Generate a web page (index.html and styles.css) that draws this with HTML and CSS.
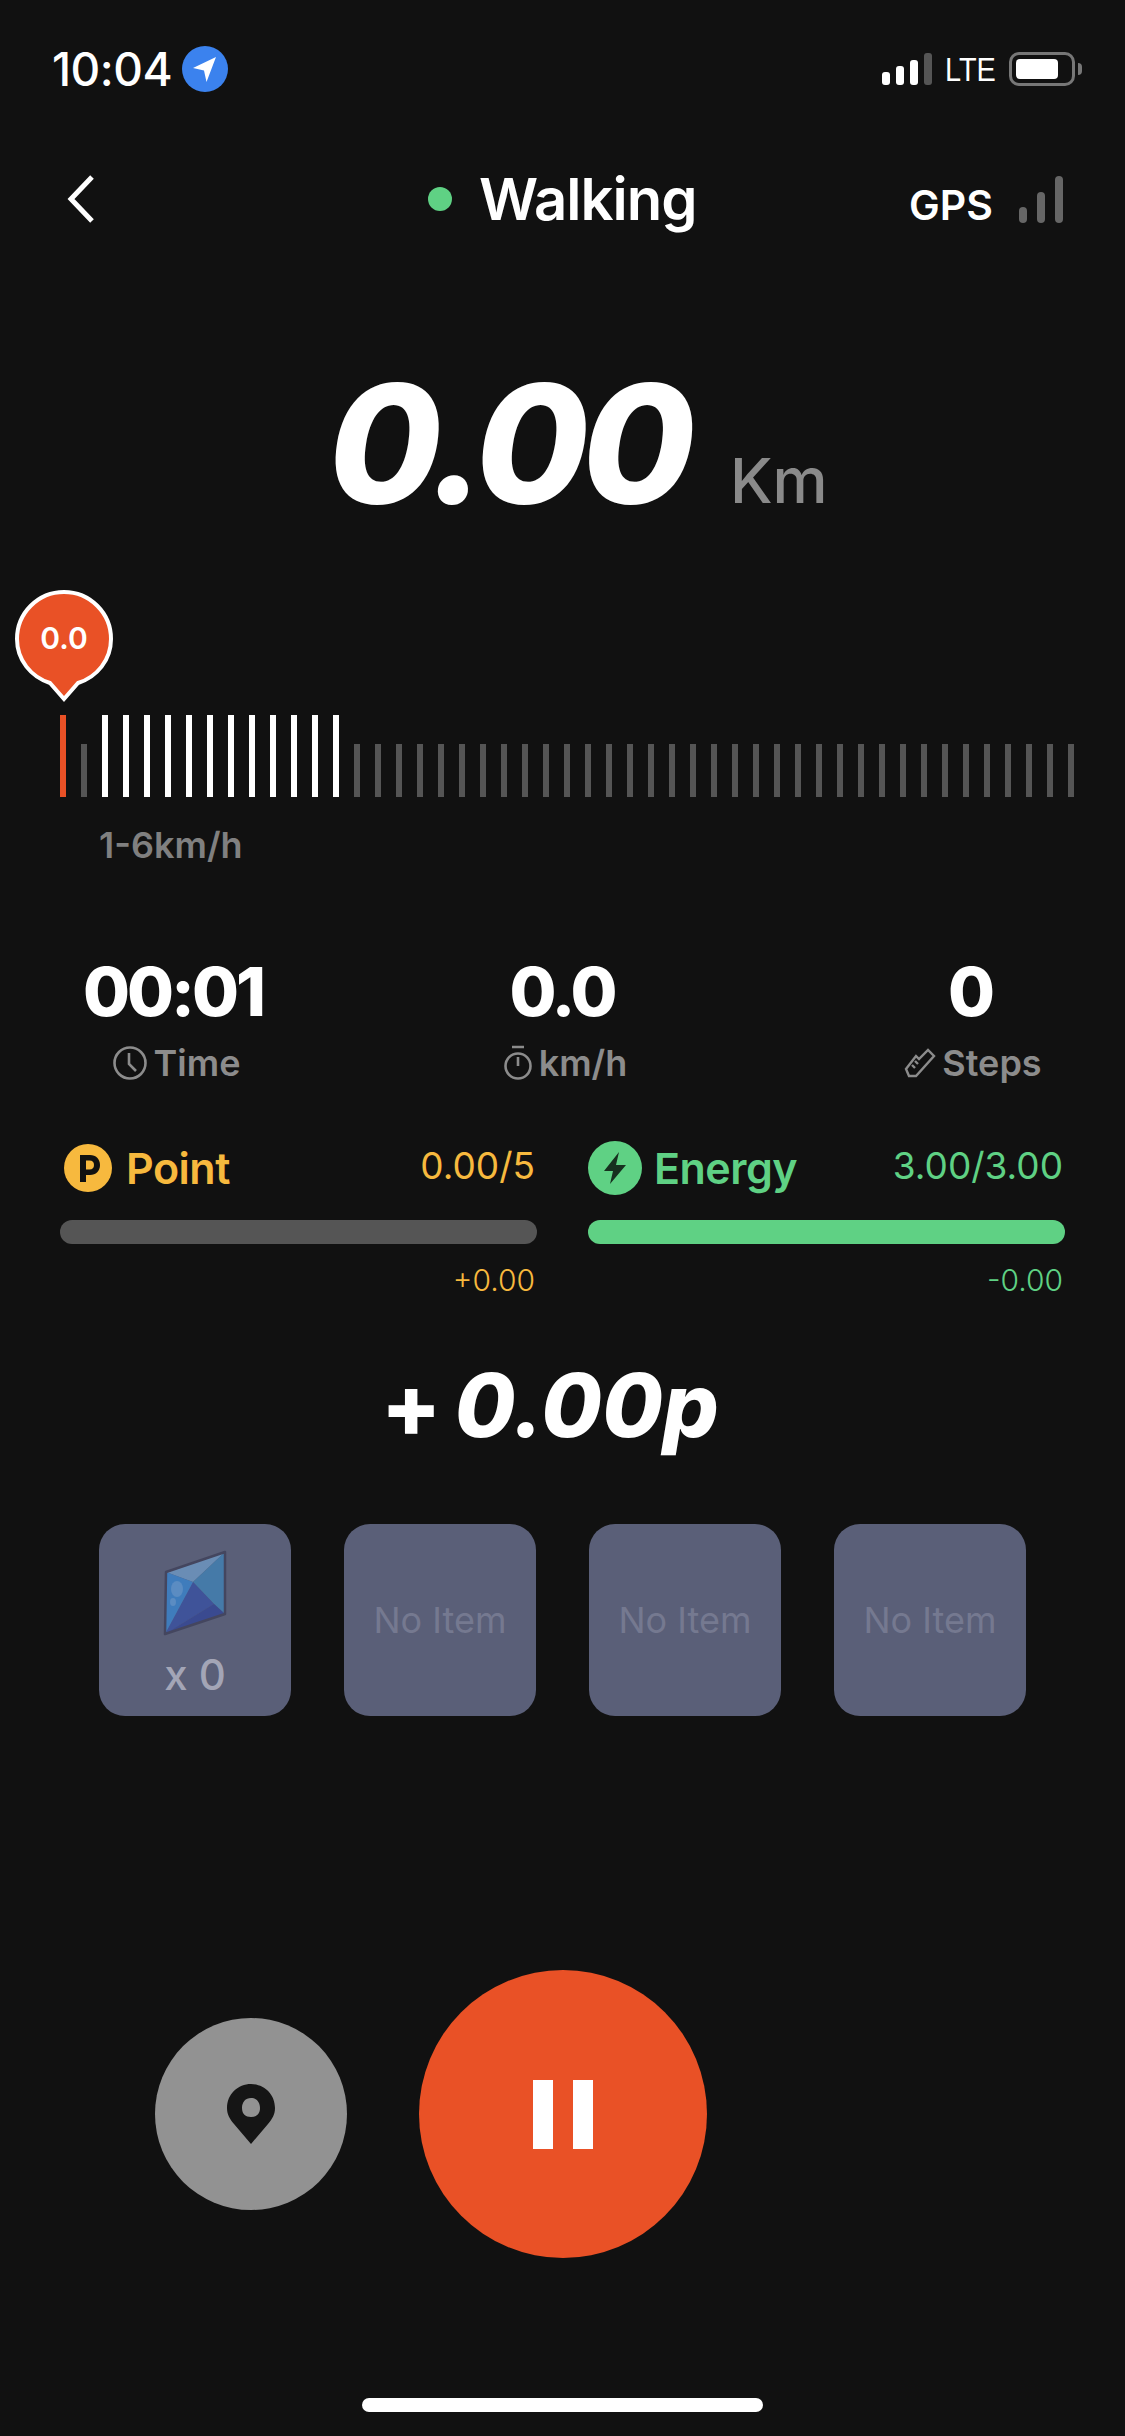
FILE: index.html
```html
<!DOCTYPE html>
<html lang="en">
<head>
	<meta charset="UTF-8">
	<title>Walking</title>
	<link rel="stylesheet" href="styles.css">
</head>
<body>
<div class="screen">
	<!-- status bar -->
	<div class="status">
		<span class="clock">10:04</span>
		<svg class="loc" width="46" height="46" viewBox="0 0 46 46">
			<circle cx="23" cy="23" r="23" fill="#3b82ee"/>
			<path d="M34 11 L11 22 L22 24.5 L24.5 36 Z" fill="#fff"/>
		</svg>
		<span class="status-space"></span>
		<div class="cell-bars">
			<i class="b1"></i><i class="b2"></i><i class="b3"></i><i class="b4"></i>
		</div>
		<span class="lte">LTE</span>
		<div class="battery"><i></i></div>
		<span class="nub"></span>
	</div>

	<!-- nav -->
	<div class="nav">
		<svg class="back" width="30" height="50" viewBox="0 0 30 50">
			<path d="M26 3 L5 25 L26 47" fill="none" stroke="#fff" stroke-width="5"/>
		</svg>
		<span class="dot"></span>
		<span class="title">Walking</span>
		<span class="gps">GPS</span>
		<div class="gps-bars"><i class="g1"></i><i class="g2"></i><i class="g3"></i></div>
	</div>

	<!-- distance -->
	<div class="distance">
		<span class="big">0.00</span>
		<span class="unit">Km</span>
	</div>

	<!-- speed scale -->
	<div class="speed">
		<div class="pin">
			<svg width="100" height="114" viewBox="0 0 100 114">
				<path d="M50 3 C76 3 97 24 97 50 C97 71 83 88 64 94 L50 110 L36 94 C17 88 3 71 3 50 C3 24 24 3 50 3 Z" fill="#e95126" stroke="#fff" stroke-width="4"/>
			</svg>
			<span class="pin-text">0.0</span>
		</div>
		<div class="ticks">
			<i class="on"></i><i></i>
			<i class="hi"></i><i class="hi"></i><i class="hi"></i><i class="hi"></i><i class="hi"></i><i class="hi"></i>
			<i class="hi"></i><i class="hi"></i><i class="hi"></i><i class="hi"></i><i class="hi"></i><i class="hi"></i>
			<i></i><i></i><i></i><i></i><i></i><i></i><i></i><i></i><i></i><i></i><i></i><i></i><i></i><i></i><i></i><i></i><i></i><i></i><i></i><i></i><i></i><i></i><i></i><i></i><i></i><i></i><i></i><i></i><i></i><i></i><i></i><i></i><i></i><i></i><i></i>
		</div>
		<div class="range">1-6km/h</div>
	</div>

	<!-- stats -->
	<div class="stats">
		<div class="stat">
			<div class="num">00:01</div>
			<div class="lbl">
				<svg width="36" height="36" viewBox="0 0 36 36" fill="none" stroke="#8c8c8c" stroke-width="2.6"><circle cx="18" cy="18" r="15.5"/><path d="M17 8 V19 L24 26"/></svg>
				Time
			</div>
		</div>
		<div class="stat">
			<div class="num">0.0</div>
			<div class="lbl">
				<svg width="30" height="36" viewBox="0 0 30 36" fill="none" stroke="#8c8c8c" stroke-width="2.6"><circle cx="15" cy="21" r="12.5"/><path d="M9 2 H21 M15 21 V12"/></svg>
				km/h
			</div>
		</div>
		<div class="stat">
			<div class="num">0</div>
			<div class="lbl">
				<svg width="32" height="32" viewBox="0 0 32 32" fill="none" stroke="#8c8c8c" stroke-width="2.4"><path d="M2 22 L12 9 L15 12 L24 3 L30 9 L12 29 L5 29 Z M8 18 L11 21 M11 14 L14 17"/></svg>
				Steps
			</div>
		</div>
	</div>

	<!-- point / energy -->
	<div class="meters">
		<div class="meter yellow">
			<div class="meter-head">
				<svg class="m-icon" width="48" height="48" viewBox="0 0 48 48">
					<circle cx="24" cy="24" r="24" fill="#f7b93e"/>
					<path fill-rule="evenodd" d="M16 11 H26 C32 11 36 15 36 21 C36 27 32 31 26 31 H22 V38 H16 Z M22 16.500 V25.500 H25.500 C28.500 25.500 30 23.800 30 21 C30 18.200 28.500 16.500 25.500 16.500 Z" fill="#111"/>
				</svg>
				<span class="m-name">Point</span>
				<span class="m-val">0.00/5</span>
			</div>
			<div class="bar"></div>
			<div class="m-diff">+0.00</div>
		</div>
		<div class="meter green">
			<div class="meter-head">
				<svg class="m-icon" width="54" height="54" viewBox="0 0 54 54">
					<circle cx="27" cy="27" r="27" fill="#5fd184"/>
					<path d="M31 11 L16 30 H25 L22 43 L38 24 H28 Z" fill="#17301f"/>
				</svg>
				<span class="m-name">Energy</span>
				<span class="m-val">3.00/3.00</span>
			</div>
			<div class="bar full"></div>
			<div class="m-diff">-0.00</div>
		</div>
	</div>

	<div class="earned"><span class="plus">+</span> 0.00p</div>

	<!-- items -->
	<div class="items">
		<div class="item gem-item">
			<svg width="64" height="86" viewBox="0 0 64 86">
				<path d="M3 22 L62 2 L30 32 Z" fill="#6a8db5"/>
				<path d="M62 2 L62 64 L51 54 L30 32 Z" fill="#457aa8"/>
				<path d="M30 32 L51 54 L2 84 Z" fill="#3f5399"/>
				<path d="M51 54 L62 64 L2 84 Z" fill="#3a4a90"/>
				<path d="M3 22 L30 32 L2 84 Z" fill="#3f7cbc"/>
				<ellipse cx="14" cy="39" rx="6" ry="8" fill="#5b8cc2"/>
				<ellipse cx="10" cy="52" rx="3" ry="4" fill="#5b8cc2"/>
				<path d="M3 22 L62 2 L62 64 L2 84 Z" fill="none" stroke="#44465f" stroke-width="2.500" stroke-linejoin="round"/>
			</svg>
			<span class="count">x 0</span>
		</div>
		<div class="item">No Item</div>
		<div class="item">No Item</div>
		<div class="item">No Item</div>
	</div>

	<!-- controls -->
	<div class="controls">
		<div class="btn-map">
			<svg width="48" height="60" viewBox="0 0 48 60">
				<path fill-rule="evenodd" d="M24 0 C37 0 48 10 48 24 C48 31 45 35 41 40 L24 60 L7 40 C3 35 0 31 0 24 C0 10 11 0 24 0 Z M24 14 C18.500 14 15 18 15 24 C15 30 18.500 33 24 33 C29.500 33 33 30 33 24 C33 18 29.500 14 24 14 Z" fill="#151515"/>
			</svg>
		</div>
		<div class="btn-pause"><i></i><i></i></div>
	</div>

	<div class="home"></div>
</div>
</body>
</html>
```

FILE: styles.css
```css
body {
	margin: 0;
	background-color: #111;
}

.screen {
	width: 1125px;
	height: 2436px;
	overflow: hidden;
	color: #fff;
	background-color: #111;
	font-family: Inter, "Noto Sans", sans-serif;
}

/* status bar */
.status {
	display: flex;
	align-items: center;
	height: 46px;
	padding: 46px 43px 0 52px;
}

.clock {
	width: 130px;
	font-size: 46px;
	font-weight: 500;
	letter-spacing: -0.5px;
}

.status-space {
	flex: 1;
}

.cell-bars {
	display: flex;
	align-items: flex-end;
	gap: 6px;
	height: 32px;
}

.cell-bars i {
	width: 8px;
	border-radius: 3px;
	background-color: #fff;
}

.cell-bars .b1 { height: 13px; }
.cell-bars .b2 { height: 19px; }
.cell-bars .b3 { height: 25px; }
.cell-bars .b4 { height: 32px; background-color: #555; }

.lte {
	width: 64px;
	margin-left: 13px;
	font-family: "Liberation Sans", sans-serif;
	font-size: 34px;
	transform: scaleX(0.85);
	transform-origin: left;
}

.battery {
	box-sizing: border-box;
	width: 66px;
	height: 34px;
	padding: 4px;
	border: 3px solid #777;
	border-radius: 10px;
}

.battery i {
	display: block;
	width: 42px;
	height: 100%;
	border-radius: 4px;
	background-color: #fff;
}

.nub {
	width: 4px;
	height: 12px;
	margin-left: 3px;
	border-radius: 0 4px 4px 0;
	background-color: #777;
}

/* nav */
.nav {
	display: flex;
	align-items: center;
	height: 60px;
	margin-top: 77px;
	padding: 0 60px 0 66px;
}

.back {
	margin-right: 332px;
}

.dot {
	width: 24px;
	height: 24px;
	border-radius: 50%;
	background-color: #5fd184;
}

.title {
	width: 430px;
	margin-left: 27px;
	font-size: 58px;
	font-weight: 600;
	letter-spacing: -1px;
}

.gps {
	width: 110px;
	padding-top: 12px;
	font-size: 41px;
	font-weight: 600;
}

.gps-bars {
	display: flex;
	align-items: flex-end;
	gap: 10px;
	height: 47px;
}

.gps-bars i {
	width: 8px;
	border-radius: 4px;
	background-color: #666;
}

.gps-bars .g1 { height: 16px; }
.gps-bars .g2 { height: 31px; }
.gps-bars .g3 { height: 47px; }

/* distance */
.distance {
	display: flex;
	align-items: baseline;
	height: 190px;
	margin-top: 115px;
	padding-left: 328px;
}

.big {
	font-size: 164px;
	font-weight: 800;
	font-style: italic;
	letter-spacing: -7px;
}

.unit {
	margin-left: 42px;
	font-size: 62px;
	font-weight: 500;
	color: #8a8a8a;
}

/* speed */
.speed {
	position: relative;
	margin-top: 55px;
	padding: 126px 0 0 60px;
}

.pin {
	position: absolute;
	left: 14px;
	top: 0;
	width: 100px;
	height: 114px;
}

.pin svg {
	display: block;
}

.pin-text {
	position: absolute;
	left: 0;
	top: 31px;
	width: 100px;
	text-align: center;
	font-size: 30px;
	font-weight: 600;
}

.ticks {
	display: flex;
	align-items: flex-end;
	gap: 15px;
	height: 82px;
}

.ticks i {
	width: 6px;
	height: 53px;
	background-color: #555;
}

.ticks .hi {
	height: 82px;
	background-color: #fff;
}

.ticks .on {
	height: 82px;
	background-color: #e95126;
}

.range {
	margin: 26px 0 0 39px;
	font-size: 36px;
	font-weight: 600;
	color: #808080;
}

/* stats */
.stats {
	display: grid;
	grid-template-columns: 226px 552px 264px;
	margin-top: 90px;
	padding-left: 60px;
}

.stat {
	text-align: center;
}

.num {
	font-size: 68px;
	font-weight: 800;
	line-height: 68px;
	letter-spacing: -3px;
}

.lbl {
	display: flex;
	align-items: center;
	justify-content: center;
	gap: 6px;
	height: 44px;
	margin-top: 16px;
	padding-left: 6px;
	font-size: 36px;
	font-weight: 600;
	color: #8c8c8c;
}

/* meters */
.meters {
	display: flex;
	gap: 51px;
	margin-top: 56px;
	padding-left: 60px;
}

.meter {
	width: 477px;
}

.yellow { color: #f7b93e; }
.green { color: #5fd184; }

.meter-head {
	display: flex;
	align-items: center;
	height: 54px;
	padding-left: 4px;
}

.green .meter-head {
	padding-left: 0;
}

.m-name {
	flex: 1;
	margin-left: 14px;
	font-size: 43px;
	font-weight: 600;
	letter-spacing: -0.5px;
}

.green .m-name {
	margin-left: 12px;
}

.m-val {
	padding: 0 2px 6px 0;
	font-size: 37px;
}

.bar {
	height: 24px;
	margin-top: 25px;
	border-radius: 12px;
	background-color: #555;
}

.bar.full {
	background-color: #5fd184;
}

.m-diff {
	margin-top: 18px;
	padding-right: 2px;
	text-align: right;
	font-size: 30px;
	font-weight: 300;
}

.earned {
	height: 100px;
	margin-top: 57px;
	padding-left: 381px;
	line-height: 100px;
	font-size: 88px;
	font-weight: 800;
	font-style: italic;
	word-spacing: -6px;
}

.plus {
	font-style: normal;
}

/* items */
.items {
	display: flex;
	gap: 53px;
	margin-top: 69px;
	padding-left: 99px;
}

.item {
	display: flex;
	align-items: center;
	justify-content: center;
	width: 192px;
	height: 192px;
	border-radius: 26px;
	background-color: #5a5f78;
	font-size: 36px;
	color: #757990;
}

.gem-item {
	flex-direction: column;
	justify-content: flex-start;
	height: 166px;
	padding-top: 26px;
}

.count {
	margin-top: 13px;
	font-size: 42px;
	font-weight: 500;
	color: #a3a5b6;
}

/* controls */
.controls {
	display: flex;
	align-items: center;
	gap: 72px;
	margin-top: 254px;
	padding-left: 155px;
}

.btn-map {
	display: flex;
	align-items: center;
	justify-content: center;
	width: 192px;
	height: 192px;
	border-radius: 50%;
	background-color: #929292;
}

.btn-pause {
	display: flex;
	align-items: center;
	justify-content: center;
	gap: 20px;
	width: 288px;
	height: 288px;
	border-radius: 50%;
	background-color: #e95126;
}

.btn-pause i {
	width: 20px;
	height: 69px;
	background-color: #fff;
}

.home {
	width: 401px;
	height: 14px;
	margin: 140px 0 0 362px;
	border-radius: 7px;
	background-color: #fff;
}
```
